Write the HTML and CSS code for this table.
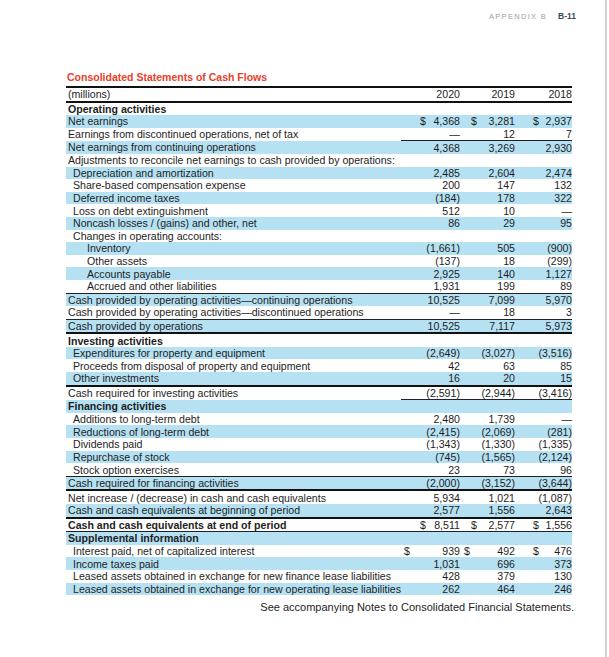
FILE: index.html
```html
<!DOCTYPE html>
<html>
<head>
<meta charset="utf-8">
<link rel="stylesheet" href="styles.css">
</head>
<body>
<div class="page">
  <div class="runhead"><span class="appx">APPENDIX B</span><span class="pno">B-11</span></div>
  <h1 class="title">Consolidated Statements of Cash Flows</h1>
  <table class="cf">
    <colgroup><col class="c-label"><col class="c-y0"><col class="c-y1"><col class="c-y2"></colgroup>
    <thead>
      <tr><th class="lbl">(millions)</th><th>2020</th><th>2019</th><th>2018</th></tr>
    </thead>
    <tbody>
      <tr class="w"><td class="lbl sec">Operating activities</td><td></td><td></td><td></td></tr>
      <tr class="b"><td class="lbl">Net earnings</td><td class="d d0"><span class="cur">$</span>4,368</td><td class="d d1"><span class="cur">$</span>3,281</td><td class="d d2"><span class="cur">$</span>2,937</td></tr>
      <tr class="w ul"><td class="lbl">Earnings from discontinued operations, net of tax</td><td>—</td><td>12</td><td>7</td></tr>
      <tr class="b"><td class="lbl">Net earnings from continuing operations</td><td>4,368</td><td>3,269</td><td>2,930</td></tr>
      <tr class="w"><td class="lbl">Adjustments to reconcile net earnings to cash provided by operations:</td><td></td><td></td><td></td></tr>
      <tr class="b"><td class="lbl i1">Depreciation and amortization</td><td>2,485</td><td>2,604</td><td>2,474</td></tr>
      <tr class="w"><td class="lbl i1">Share-based compensation expense</td><td>200</td><td>147</td><td>132</td></tr>
      <tr class="b"><td class="lbl i1">Deferred income taxes</td><td>(184)</td><td>178</td><td>322</td></tr>
      <tr class="w"><td class="lbl i1">Loss on debt extinguishment</td><td>512</td><td>10</td><td>—</td></tr>
      <tr class="b"><td class="lbl i1">Noncash losses / (gains) and other, net</td><td>86</td><td>29</td><td>95</td></tr>
      <tr class="w"><td class="lbl i1">Changes in operating accounts:</td><td></td><td></td><td></td></tr>
      <tr class="b"><td class="lbl i2">Inventory</td><td>(1,661)</td><td>505</td><td>(900)</td></tr>
      <tr class="w"><td class="lbl i2">Other assets</td><td>(137)</td><td>18</td><td>(299)</td></tr>
      <tr class="b"><td class="lbl i2">Accounts payable</td><td>2,925</td><td>140</td><td>1,127</td></tr>
      <tr class="w rule1"><td class="lbl i2">Accrued and other liabilities</td><td>1,931</td><td>199</td><td>89</td></tr>
      <tr class="b"><td class="lbl">Cash provided by operating activities—continuing operations</td><td>10,525</td><td>7,099</td><td>5,970</td></tr>
      <tr class="w rule1"><td class="lbl">Cash provided by operating activities—discontinued operations</td><td>—</td><td>18</td><td>3</td></tr>
      <tr class="b rule2"><td class="lbl">Cash provided by operations</td><td>10,525</td><td>7,117</td><td>5,973</td></tr>
      <tr class="w"><td class="lbl sec">Investing activities</td><td></td><td></td><td></td></tr>
      <tr class="b"><td class="lbl i1">Expenditures for property and equipment</td><td>(2,649)</td><td>(3,027)</td><td>(3,516)</td></tr>
      <tr class="w"><td class="lbl i1">Proceeds from disposal of property and equipment</td><td>42</td><td>63</td><td>85</td></tr>
      <tr class="b rule2"><td class="lbl i1">Other investments</td><td>16</td><td>20</td><td>15</td></tr>
      <tr class="w ul"><td class="lbl">Cash required for investing activities</td><td>(2,591)</td><td>(2,944)</td><td>(3,416)</td></tr>
      <tr class="b"><td class="lbl sec">Financing activities</td><td></td><td></td><td></td></tr>
      <tr class="w"><td class="lbl i1">Additions to long-term debt</td><td>2,480</td><td>1,739</td><td>—</td></tr>
      <tr class="b"><td class="lbl i1">Reductions of long-term debt</td><td>(2,415)</td><td>(2,069)</td><td>(281)</td></tr>
      <tr class="w"><td class="lbl i1">Dividends paid</td><td>(1,343)</td><td>(1,330)</td><td>(1,335)</td></tr>
      <tr class="b"><td class="lbl i1">Repurchase of stock</td><td>(745)</td><td>(1,565)</td><td>(2,124)</td></tr>
      <tr class="w rule1"><td class="lbl i1">Stock option exercises</td><td>23</td><td>73</td><td>96</td></tr>
      <tr class="b rule2"><td class="lbl">Cash required for financing activities</td><td>(2,000)</td><td>(3,152)</td><td>(3,644)</td></tr>
      <tr class="w"><td class="lbl">Net increase / (decrease) in cash and cash equivalents</td><td>5,934</td><td>1,021</td><td>(1,087)</td></tr>
      <tr class="b rule2"><td class="lbl">Cash and cash equivalents at beginning of period</td><td>2,577</td><td>1,556</td><td>2,643</td></tr>
      <tr class="w rule1"><td class="lbl sec">Cash and cash equivalents at end of period</td><td class="d d0"><span class="cur">$</span>8,511</td><td class="d d1"><span class="cur">$</span>2,577</td><td class="d d2"><span class="cur">$</span>1,556</td></tr>
      <tr class="b"><td class="lbl sec">Supplemental information</td><td></td><td></td><td></td></tr>
      <tr class="w"><td class="lbl i1">Interest paid, net of capitalized interest</td><td class="d far"><span class="cur">$</span>939</td><td class="d far1"><span class="cur">$</span>492</td><td class="d far2"><span class="cur">$</span>476</td></tr>
      <tr class="b"><td class="lbl i1">Income taxes paid</td><td>1,031</td><td>696</td><td>373</td></tr>
      <tr class="w"><td class="lbl i1">Leased assets obtained in exchange for new finance lease liabilities</td><td>428</td><td>379</td><td>130</td></tr>
      <tr class="b"><td class="lbl i1">Leased assets obtained in exchange for new operating lease liabilities</td><td>262</td><td>464</td><td>246</td></tr>
    </tbody>
  </table>
  <p class="note">See accompanying Notes to Consolidated Financial Statements.</p>
</div>
</body>
</html>
```
FILE: styles.css
```css
html, body {
  margin: 0;
  padding: 0;
  background: #ffffff;
}
body {
  font-family: "Liberation Sans", Arial, sans-serif;
  color: #1e1e1e;
  width: 607px;
  height: 657px;
  overflow: hidden;
  border-right: 2px solid #d2d2d2;
  box-sizing: border-box;
}
.page {
  padding: 0 0 0 66px;
  width: 506px;
}
.runhead {
  display: flex;
  justify-content: flex-end;
  align-items: baseline;
  gap: 11px;
  padding-top: 11px;
  height: 22px;
  box-sizing: border-box;
  font-size: 7.5px;
  margin-right: -4px;
}
.appx {
  color: #a0a0a0;
  letter-spacing: 1.3px;
}
.pno {
  font-weight: bold;
  color: #3c4659;
  font-size: 8.5px;
}
.title {
  margin: 49px 0 0 1px;
  font-size: 10.5px;
  line-height: 13px;
  font-weight: bold;
  color: #e8402a;
}
.cf {
  width: 506px;
  border-collapse: collapse;
  font-size: 10.6px;
  line-height: 12px;
  margin-top: 2px;
}
.c-label { width: 332px; }
.c-y0 { width: 60px; }
.c-y1 { width: 56px; }
.c-y2 { width: 58px; }
.cf th, .cf td {
  padding: 0;
  height: 12.6px;
  text-align: right;
  white-space: nowrap;
  vertical-align: middle;
}
.cf th {
  font-weight: normal;
}
.cf thead tr {
  border-top: 2px solid #111;
  border-bottom: 2px solid #111;
}
.cf .lbl {
  text-align: left;
  padding-left: 2px;
}
.cf .lbl.i1 { padding-left: 7px; }
.cf .lbl.i2 { padding-left: 21px; }
.cf .sec { font-weight: bold; }
.cf tr.b { background: #b5e1f3; }
.cf tr.w { background: #ffffff; }
.cf tr.ul td:not(.lbl) {
  border-bottom: 1px solid #222;
}
.cf tr.rule1 td {
  border-bottom: 1px solid #222;
}
.cf tr.rule2 td {
  border-bottom: 2px solid #111;
}
.cf td.d {
  position: relative;
}
.cf td.d .cur {
  position: absolute;
  top: 0;
}
.cf td.d0 .cur { left: 19px; }
.cf td.d1 .cur { left: 11px; }
.cf td.d2 .cur { left: 18px; }
.cf td.far .cur { left: 3px; }
.cf td.far1 .cur { left: 4px; }
.cf td.far2 .cur { left: 18px; }
.note {
  margin: 6px -2px 0 0;
  text-align: right;
  font-size: 11px;
  line-height: 13px;
  color: #1e1e1e;
}
```
